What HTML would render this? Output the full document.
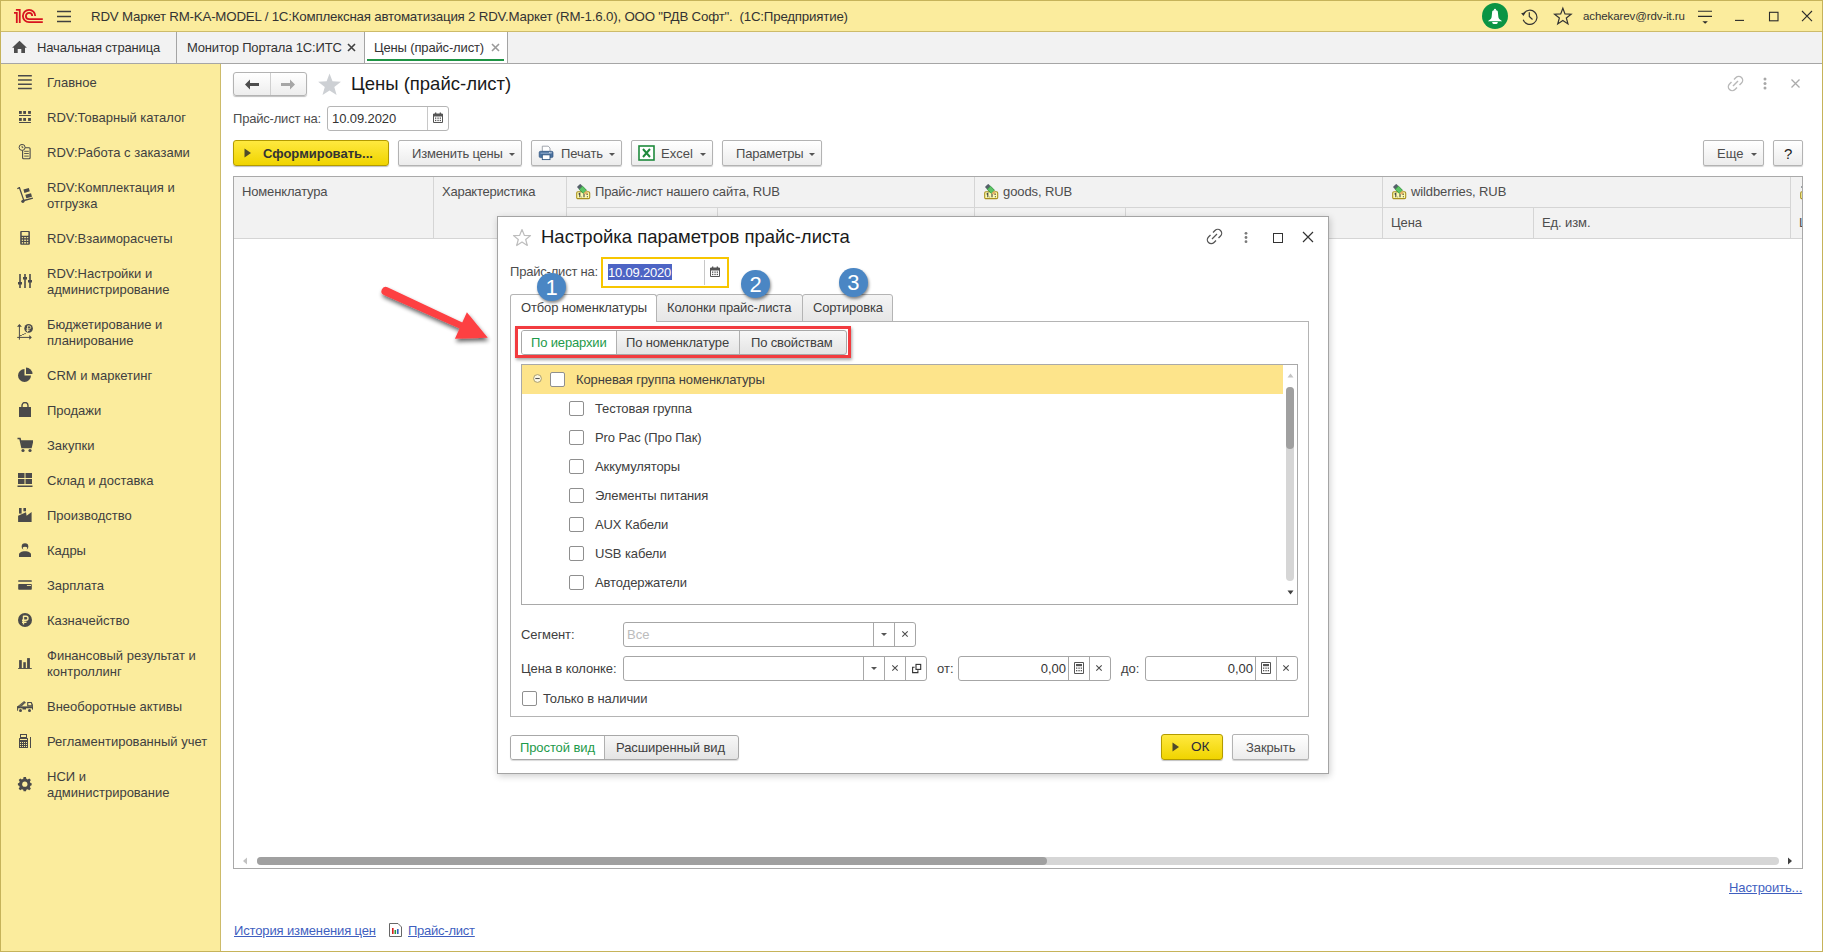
<!DOCTYPE html>
<html><head><meta charset="utf-8">
<style>
*{box-sizing:border-box;margin:0;padding:0}
html,body{width:1823px;height:952px;overflow:hidden;background:#fff}
body{position:relative;font-family:"Liberation Sans",sans-serif;font-size:13px;color:#4d4d4d}
.a{position:absolute}
.t{position:absolute;white-space:nowrap;line-height:16px}
#frame{left:0;top:0;width:1823px;height:952px;border:1px solid #c6b35a;pointer-events:none;z-index:50}
#titlebar{left:0;top:0;width:1823px;height:32px;background:#fbec9d;border-bottom:1px solid #cdbb6a}
#tabs{left:0;top:32px;width:1823px;height:32px;background:#f2f2f2;border-bottom:1px solid #a6a6a6}
#side{left:0;top:64px;width:221px;height:888px;background:#fbec9d;border-right:1px solid #cdbb6a}
.si{position:absolute;left:47px;color:#404040;line-height:16px}
.ic{position:absolute;left:17px;width:16px;height:16px}
.btn{position:absolute;height:26px;border:1px solid #b3b3b3;border-radius:2px;background:linear-gradient(#fff,#ececec);box-shadow:0 1px 1px rgba(0,0,0,.18);color:#404040;line-height:24px;white-space:nowrap}
.dd{position:absolute;width:0;height:0;border-left:3px solid transparent;border-right:3px solid transparent;border-top:3px solid #555}
.hdr{position:absolute;background:#f2f2f2;border-right:1px solid #dcdcdc;border-bottom:1px solid #dcdcdc}
.cb{position:absolute;width:15px;height:15px;border:1px solid #8f8f8f;border-radius:2px;background:#fff}
.fld{position:absolute;height:25px;border:1px solid #a6a6a6;border-radius:3px;background:#fff}
.lnk{position:absolute;color:#3f5fbf;text-decoration:underline;white-space:nowrap;line-height:16px}
</style></head><body>

<!-- title bar -->
<div id="titlebar" class="a"></div>
<svg class="a" style="left:12px;top:7px" width="34" height="18" viewBox="0 0 34 18">
 <g fill="none" stroke="#d7141f" stroke-width="1.8">
  <path d="M2 5.95H4.8V15.9"/>
  <path d="M3.9 2.85H7.75V15.9"/>
  <path d="M23.2 9A6.15 6.15 0 1 0 17.05 15.15H30.8"/>
  <path d="M20.2 9A3.15 3.15 0 1 0 17.05 12.15H30.8"/>
 </g>
</svg>
<svg class="a" style="left:56px;top:10px" width="16" height="13" viewBox="0 0 16 13"><g stroke="#404040" stroke-width="1.4"><path d="M1 1.5H15M1 6.5H15M1 11.5H15"/></g></svg>
<div class="t" style="left:91px;top:9px;color:#333;font-size:13.3px;letter-spacing:-0.2px">RDV Маркет RM-KA-MODEL / 1С:Комплексная автоматизация 2 RDV.Маркет (RM-1.6.0), ООО "РДВ Софт".&nbsp; (1С:Предприятие)</div>
<div class="a" style="left:1481.85px;top:2.9px;width:26px;height:26px;border-radius:50%;background:#0b9444"></div>
<svg class="a" style="left:1481px;top:3px" width="28" height="26" viewBox="0 0 28 26"><circle cx="14" cy="6.8" r="1.1" fill="#fff"/><path d="M11.2 8.6C11.2 7.7 12.5 7.2 14 7.2S16.8 7.7 16.8 8.6L17.4 14.2C17.7 16 19.6 17 21.1 18.2H6.9C8.4 17 10.3 16 10.6 14.2Z" fill="#fff"/><path d="M11.2 18.9H16.8A2.8 2.2 0 0 1 11.2 18.9Z" fill="#fff"/></svg>
<svg class="a" style="left:1519px;top:6px" width="20" height="20" viewBox="0 0 20 20"><g fill="none" stroke="#333" stroke-width="1.2"><path d="M4.2 13.8A7.1 7.1 0 1 0 4.8 7.6"/><path d="M10.3 6.3V10.5L13.5 13.5"/></g><path d="M2.1 7.2L6.7 6.3L4.5 9.9Z" fill="#333"/></svg>
<svg class="a" style="left:1553px;top:6px" width="20" height="20" viewBox="0 0 20 20"><path d="M9.85 2.2L12 7.95L18.1 8.2L13.32 12.03L14.96 17.94L9.85 14.55L4.74 17.94L6.38 12.03L1.58 8.2L7.7 7.95Z" fill="none" stroke="#333" stroke-width="1.2" stroke-linejoin="miter"/></svg>
<div class="t" style="left:1583px;top:8px;color:#333;font-size:11.5px;letter-spacing:-0.1px">achekarev@rdv-it.ru</div>
<svg class="a" style="left:1690px;top:0px" width="133" height="32" viewBox="0 0 133 32"><g stroke="#2b2b2b" stroke-width="1.1" fill="none"><path d="M8 11.3H22M8 16.4H22"/><path d="M45 20.4H54"/><rect x="79.5" y="12.3" width="8.5" height="8.5"/><path d="M112 11L122 21.2M122 11L112 21.2"/></g><path d="M12.4 21.2H17.9L15.15 23.8Z" fill="#2b2b2b"/></svg>
<div id="tabs" class="a"></div>
<svg class="a" style="left:11px;top:40px" width="17" height="14" viewBox="0 0 17 14"><path d="M8.5 0.8L15.9 7.8H14V12.9H10.3V8.9H6.7V12.9H3V7.8H1.1Z" fill="#4d4d4d"/></svg>
<div class="t" style="left:37px;top:39.5px;color:#333;letter-spacing:-0.15px">Начальная страница</div>
<div class="a" style="left:176px;top:32px;width:1px;height:31px;background:#a4a4a4"></div>
<div class="t" style="left:187px;top:39.5px;color:#333;letter-spacing:-0.17px">Монитор Портала 1С:ИТС</div>
<svg class="a" style="left:347px;top:43px" width="9" height="9" viewBox="0 0 9 9"><path d="M1 1L8 8M8 1L1 8" stroke="#404040" stroke-width="1.6"/></svg>
<div class="a" style="left:364px;top:32px;width:1px;height:31px;background:#a4a4a4"></div>
<div class="a" style="left:365px;top:32px;width:142px;height:31px;background:#fff"></div>
<div class="t" style="left:374px;top:39.5px;color:#333;letter-spacing:-0.15px">Цены (прайс-лист)</div>
<svg class="a" style="left:491px;top:43px" width="9" height="9" viewBox="0 0 9 9"><path d="M1 1L8 8M8 1L1 8" stroke="#9a9a9a" stroke-width="1.6"/></svg>
<div class="a" style="left:367px;top:59px;width:137px;height:2px;background:#1e9444"></div>
<div class="a" style="left:507px;top:32px;width:1px;height:31px;background:#a4a4a4"></div>
<div id="side" class="a"></div>
<div class="si" style="top:74.5px">Главное</div>
<svg class="a" style="left:17px;top:74.0px" width="16" height="16" viewBox="0 0 16 16"><path d="M1 1.8H14.8M1 6H14.8M1 10.3H14.8M1 14.6H14.8" stroke="#4a4a4a" stroke-width="1.5"/></svg>
<div class="si" style="top:109.5px">RDV:Товарный каталог</div>
<svg class="a" style="left:17px;top:109.0px" width="16" height="16" viewBox="0 0 16 16"><g fill="#4a4a4a"><rect x="2" y="2" width="2.8" height="2.9"/><rect x="6.2" y="2" width="2.8" height="2.9"/><rect x="11.1" y="2" width="2.8" height="2.9"/><rect x="2" y="6" width="11.9" height="1"/><rect x="2" y="9" width="2.8" height="2.9"/><rect x="6.2" y="9" width="2.8" height="2.9"/><rect x="11.1" y="9" width="2.8" height="2.9"/><rect x="2" y="13" width="11.9" height="1"/></g></svg>
<div class="si" style="top:144.5px">RDV:Работа с заказами</div>
<svg class="a" style="left:17px;top:144.0px" width="16" height="16" viewBox="0 0 16 16"><rect x="5.6" y="3.7" width="7.5" height="11" rx="1" fill="none" stroke="#4a4a4a" stroke-width="1.1"/><path d="M7.2 7.3H11.8M7.2 9.5H11.8M7.2 12.1H11.8" stroke="#4a4a4a" stroke-width="0.9"/><circle cx="5.1" cy="3.4" r="3" fill="#fbec9d" stroke="#4a4a4a" stroke-width="1"/><path d="M5.1 1.8V3.6H6.3" fill="none" stroke="#4a4a4a" stroke-width="0.9"/></svg>
<div class="si" style="top:179.5px">RDV:Комплектация и<br>отгрузка</div>
<svg class="a" style="left:17px;top:187.0px" width="16" height="16" viewBox="0 0 16 16"><path d="M0.3 1.8L2.4 0.6L6.8 13.4M7 13.5L15.9 11.1" fill="none" stroke="#4a4a4a" stroke-width="1.3"/><circle cx="5.9" cy="14.3" r="1.6" fill="#4a4a4a"/><path d="M6.46 2.46L11.83 0.89L12.77 4.36L7.41 5.93Z" fill="#4a4a4a"/><path d="M8.36 7.83L14.03 6.25L14.98 9.72L9.3 11.3Z" fill="#4a4a4a"/></svg>
<div class="si" style="top:230.5px">RDV:Взаиморасчеты</div>
<svg class="a" style="left:17px;top:230.0px" width="16" height="16" viewBox="0 0 16 16"><rect x="3.2" y="1" width="9.7" height="13.8" rx="1" fill="#4a4a4a"/><rect x="4.7" y="2" width="6.7" height="3.7" rx="0.5" fill="#fbec9d"/><g fill="#fbec9d"><rect x="4.8" y="7.1" width="1.3" height="1.1"/><rect x="7.1" y="7.1" width="1.9" height="1.1"/><rect x="9.8" y="7.1" width="1.5" height="1.1"/><rect x="4.8" y="9.6" width="1.3" height="1.3"/><rect x="7.1" y="9.6" width="1.9" height="1.3"/><rect x="9.8" y="9.6" width="1.5" height="1.3"/><rect x="4.8" y="12.1" width="1.3" height="1.4"/><rect x="7.1" y="12.1" width="1.9" height="1.4"/><rect x="9.8" y="12.1" width="1.5" height="1.4"/></g></svg>
<div class="si" style="top:265.5px">RDV:Настройки и<br>администрирование</div>
<svg class="a" style="left:17px;top:273.0px" width="16" height="16" viewBox="0 0 16 16"><g stroke="#4a4a4a" stroke-width="1.6"><path d="M3 1V15M8 1V15M13 1V15"/></g><g fill="#4a4a4a"><rect x="1" y="9" width="4" height="2.5"/><rect x="6" y="4" width="4" height="2.5"/><rect x="11" y="7" width="4" height="2.5"/></g></svg>
<div class="si" style="top:316.5px">Бюджетирование и<br>планирование</div>
<svg class="a" style="left:17px;top:324.0px" width="16" height="16" viewBox="0 0 16 16"><path d="M2.4 1.5V15.7M0.2 13.4H13" fill="none" stroke="#4a4a4a" stroke-width="1"/><path d="M0 2.8L2.4 0L4.9 2.8ZM12.3 11.1L14.8 13.4L12.3 15.7Z" fill="#4a4a4a"/><path d="M3 11.6L4.5 11.5L5.5 10.5H6.8L7.6 9.6H8.8" fill="none" stroke="#4a4a4a" stroke-width="0.9"/><circle cx="11.6" cy="4.4" r="4.3" fill="#4a4a4a"/><path d="M10.6 8V1.9H12.2A1.5 1.5 0 0 1 12.2 4.9H9.3M9.3 6.4H12.5" fill="none" stroke="#fbec9d" stroke-width="0.9"/></svg>
<div class="si" style="top:367.5px">CRM и маркетинг</div>
<svg class="a" style="left:17px;top:367.0px" width="16" height="16" viewBox="0 0 16 16"><path d="M7.5 2A6.5 6.5 0 1 0 14 8.5H7.5Z" fill="#4a4a4a"/><path d="M9 0.5A6.5 6.5 0 0 1 15.5 7H9Z" fill="#4a4a4a"/></svg>
<div class="si" style="top:402.5px">Продажи</div>
<svg class="a" style="left:17px;top:402.0px" width="16" height="16" viewBox="0 0 16 16"><path d="M2 5H14V15H2Z" fill="#4a4a4a"/><path d="M5 6V3.5A3 3 0 0 1 11 3.5V6" fill="none" stroke="#4a4a4a" stroke-width="1.4"/></svg>
<div class="si" style="top:437.5px">Закупки</div>
<svg class="a" style="left:17px;top:437.0px" width="16" height="16" viewBox="0 0 16 16"><path d="M0.5 1.5H3L5 10.5H14L15.5 4H4" fill="none" stroke="#4a4a4a" stroke-width="1.6"/><path d="M4 4H15.5L14 10H5Z" fill="#4a4a4a"/><circle cx="6" cy="13.5" r="1.6" fill="#4a4a4a"/><circle cx="13" cy="13.5" r="1.6" fill="#4a4a4a"/></svg>
<div class="si" style="top:472.5px">Склад и доставка</div>
<svg class="a" style="left:17px;top:472.0px" width="16" height="16" viewBox="0 0 16 16"><g fill="#4a4a4a"><rect x="1" y="1" width="6.5" height="5"/><rect x="8.5" y="1" width="6.5" height="5"/><rect x="1" y="7" width="6.5" height="5"/><rect x="8.5" y="7" width="6.5" height="5"/><rect x="0.5" y="13.5" width="15" height="1.5"/></g></svg>
<div class="si" style="top:507.5px">Производство</div>
<svg class="a" style="left:17px;top:507.0px" width="16" height="16" viewBox="0 0 16 16"><g fill="#4a4a4a"><rect x="2" y="1" width="2.6" height="5.6"/><rect x="6.4" y="1" width="2.6" height="3.3"/><path d="M1.1 8.7L9 5.2L9.6 8.7L14.6 4.9V14.9H1.1Z"/></g></svg>
<div class="si" style="top:542.5px">Кадры</div>
<svg class="a" style="left:17px;top:542.0px" width="16" height="16" viewBox="0 0 16 16"><circle cx="8" cy="4.6" r="3.3" fill="#4a4a4a"/><path d="M5.9 5.2Q8 4.2 10.1 5.2V6.3A2.1 2.3 0 0 1 5.9 6.3Z" fill="#fbec9d"/><path d="M2 14.9V12.6C2 10.6 4.5 9.3 8 9.3S14 10.6 14 12.6V14.9Z" fill="#4a4a4a"/></svg>
<div class="si" style="top:577.5px">Зарплата</div>
<svg class="a" style="left:17px;top:577.0px" width="16" height="16" viewBox="0 0 16 16"><rect x="1.2" y="3.2" width="13.6" height="1.5" rx="0.5" fill="#4a4a4a"/><rect x="1.2" y="6.9" width="13.6" height="5.8" rx="0.8" fill="#4a4a4a"/><rect x="9.9" y="8.1" width="4.1" height="0.9" fill="#fbec9d"/></svg>
<div class="si" style="top:612.5px">Казначейство</div>
<svg class="a" style="left:17px;top:612.0px" width="16" height="16" viewBox="0 0 16 16"><circle cx="8" cy="8" r="7" fill="#4a4a4a"/><path d="M6.5 3.8V12.5M6.2 4.3H9A2 2 0 0 1 9 8.3H5M5 10.2H9.5" stroke="#fbec9d" stroke-width="1.4" fill="none"/></svg>
<div class="si" style="top:647.5px">Финансовый результат и<br>контроллинг</div>
<svg class="a" style="left:17px;top:655.0px" width="16" height="16" viewBox="0 0 16 16"><g fill="#4a4a4a"><rect x="2.1" y="5.1" width="2.7" height="8.1"/><rect x="6.3" y="7.2" width="2.5" height="6"/><rect x="10.1" y="3.1" width="2.8" height="10.1"/><rect x="1.1" y="13" width="13.7" height="0.9"/></g></svg>
<div class="si" style="top:698.5px">Внеоборотные активы</div>
<svg class="a" style="left:17px;top:698.0px" width="16" height="16" viewBox="0 0 16 16"><path d="M10.2 4.1H14.6L15.9 6.8V8.4H10.2Z" fill="#4a4a4a"/><path d="M11.3 5H13.9L14.6 7.3H11.3Z" fill="#fbec9d"/><rect x="0.2" y="8.4" width="15.7" height="1.9" fill="#4a4a4a"/><rect x="5.5" y="10" width="3.5" height="1.5" fill="#4a4a4a"/><path d="M0.3 8.4L7.2 2.9L8.9 4.7L2.6 9.9Z" fill="#4a4a4a"/><path d="M2 8.3L7.3 4M3.5 8.9L8.1 5" stroke="#fbec9d" stroke-width="0.5" stroke-dasharray="0.8 0.8"/><rect x="0.1" y="8.4" width="1" height="4.3" fill="#4a4a4a"/><rect x="15" y="8.4" width="1" height="3.2" fill="#4a4a4a"/><circle cx="3.5" cy="12.5" r="1.5" fill="#4a4a4a"/><circle cx="12.5" cy="12.5" r="1.5" fill="#4a4a4a"/></svg>
<div class="si" style="top:733.5px">Регламентированный учет</div>
<svg class="a" style="left:17px;top:733.0px" width="16" height="16" viewBox="0 0 16 16"><rect x="3.5" y="1.5" width="6" height="3" fill="none" stroke="#4a4a4a" stroke-width="1"/><rect x="2" y="5" width="9" height="10" rx="0.5" fill="#4a4a4a"/><rect x="3" y="6" width="7" height="1" fill="#fbec9d"/><g fill="#fbec9d" shape-rendering="crispEdges"><rect x="3" y="9" width="1" height="1"/><rect x="5" y="9" width="1" height="1"/><rect x="7" y="9" width="1" height="1"/><rect x="9" y="9" width="1" height="1"/><rect x="3" y="11" width="1" height="1"/><rect x="5" y="11" width="1" height="1"/><rect x="7" y="11" width="1" height="1"/><rect x="9" y="11" width="1" height="1"/><rect x="3" y="13" width="1" height="1"/><rect x="5" y="13" width="1" height="1"/><rect x="7" y="13" width="1" height="1"/><rect x="9" y="13" width="1" height="1"/></g><rect x="13" y="4" width="1" height="11" fill="#4a4a4a"/></svg>
<div class="si" style="top:768.5px">НСИ и<br>администрирование</div>
<svg class="a" style="left:17px;top:776.0px" width="16" height="16" viewBox="0 0 16 16"><g fill="#4a4a4a"><path d="M6.6 0.5H9.4L9.8 2.6L11.4 3.3L13.2 2.1L15.1 4L13.9 5.8L14.6 7.4L16 7.8V10.2L14.6 10.6L13.9 12.2L15.1 14L13.2 15.9L11.4 14.7L9.8 15.4L9.4 17H6.6L6.2 15.4L4.6 14.7L2.8 15.9L0.9 14L2.1 12.2L1.4 10.6L0 10.2V7.8L1.4 7.4L2.1 5.8L0.9 4L2.8 2.1L4.6 3.3L6.2 2.6Z" transform="translate(0.9,0.6) scale(0.86)"/></g><circle cx="7.8" cy="8.2" r="2.6" fill="#fbec9d"/></svg>


<!-- ===== content ===== -->
<div class="a" style="left:233px;top:72px;width:74px;height:24px;border:1px solid #b3b3b3;border-radius:3px;background:linear-gradient(#fff,#ededed);box-shadow:0 1px 1px rgba(0,0,0,.25)"></div>
<div class="a" style="left:270px;top:73px;width:1px;height:22px;background:#cfcfcf"></div>
<svg class="a" style="left:245px;top:79px" width="14" height="11" viewBox="0 0 14 11"><path d="M0 5.5L5 0.5V4H14V7H5V10.5Z" fill="#4d4d4d"/></svg>
<svg class="a" style="left:281px;top:79px" width="14" height="11" viewBox="0 0 14 11"><path d="M14 5.5L9 0.5V4H0V7H9V10.5Z" fill="#a6a6a6"/></svg>
<svg class="a" style="left:317px;top:72px" width="25" height="24" viewBox="0 0 25 24"><path d="M12.55 1.4L15.49 9.35L23.96 9.69L17.31 14.95L19.6 23.11L12.55 18.4L5.5 23.11L7.79 14.95L1.14 9.69L9.61 9.35Z" fill="#cdd0d4"/></svg>
<div class="t" style="left:351px;top:73px;font-size:18.5px;line-height:22px;color:#1a1a1a">Цены (прайс-лист)</div>
<svg class="a" style="left:1727px;top:75px" width="17" height="17" viewBox="0 0 17 17"><g fill="none" stroke="#b8b8b8" stroke-width="1.4"><path d="M7 4.5L9 2.5A3 3 0 0 1 14.5 8L12.5 10"/><path d="M10 12.5L8 14.5A3 3 0 0 1 2.5 9L4.5 7"/><path d="M6 11L11 6"/></g></svg>
<svg class="a" style="left:1762px;top:77px" width="6" height="13" viewBox="0 0 6 13"><g fill="#a8a8a8"><circle cx="3" cy="2" r="1.5"/><circle cx="3" cy="6.5" r="1.5"/><circle cx="3" cy="11" r="1.5"/></g></svg>
<svg class="a" style="left:1790px;top:78px" width="11" height="11" viewBox="0 0 11 11"><path d="M1.5 1.5L9.5 9.5M9.5 1.5L1.5 9.5" stroke="#ababab" stroke-width="1.3"/></svg>

<div class="t" style="left:233px;top:111px;letter-spacing:-0.2px">Прайс-лист на:</div>
<div class="fld" style="left:327px;top:106px;width:122px;height:25px;border-color:#b5b5b5"></div>
<div class="a" style="left:427px;top:107px;width:1px;height:23px;background:#c8c8c8"></div>
<div class="t" style="left:332px;top:111px;color:#333;letter-spacing:-0.1px">10.09.2020</div>
<svg class="a" style="left:433px;top:112px" width="10" height="11" viewBox="0 0 10 11"><path d="M0.5 2H9.5V10.5H0.5Z" fill="none" stroke="#555" stroke-width="1"/><rect x="0.5" y="2" width="9" height="2.5" fill="#555"/><rect x="2" y="0.5" width="1.3" height="2.5" fill="#555"/><rect x="6.7" y="0.5" width="1.3" height="2.5" fill="#555"/><g fill="#555"><rect x="2" y="5.5" width="1.3" height="1.3"/><rect x="4.4" y="5.5" width="1.3" height="1.3"/><rect x="6.7" y="5.5" width="1.3" height="1.3"/><rect x="2" y="7.8" width="1.3" height="1.3"/><rect x="4.4" y="7.8" width="1.3" height="1.3"/><rect x="6.7" y="7.8" width="1.3" height="1.3"/></g></svg>

<!-- command bar -->
<div class="a" style="left:233px;top:140px;width:156px;height:26px;border:1px solid #b39b00;border-radius:3px;background:linear-gradient(#ffe93f,#f0d400);box-shadow:0 1px 1px rgba(0,0,0,.25)"></div>
<svg class="a" style="left:244px;top:148px" width="8" height="10" viewBox="0 0 8 10"><path d="M0.5 0.5L7 5L0.5 9.5Z" fill="#4f4a2a"/></svg>
<div class="t" style="left:263px;top:146px;font-weight:bold;color:#333">Сформировать...</div>

<div class="btn" style="left:398px;top:140px;width:124px"></div>
<div class="t" style="left:412px;top:146px;letter-spacing:-0.2px">Изменить цены</div>
<div class="dd" style="left:509px;top:153px"></div>

<div class="btn" style="left:531px;top:140px;width:91px"></div>
<svg class="a" style="left:538px;top:145px" width="16" height="16" viewBox="0 0 16 16"><path d="M4.3 1.2H10.2L12 3V6.8H4.3Z" fill="#fff" stroke="#8a9099" stroke-width="0.8"/><rect x="1.2" y="6.3" width="13.8" height="6.3" rx="1.3" fill="#4a72a0" stroke="#30557f" stroke-width="0.7"/><path d="M2.6 8.2H13.6" stroke="#b5c8e0" stroke-width="0.7"/><circle cx="11.6" cy="7.3" r="0.5" fill="#fff"/><circle cx="13" cy="7.3" r="0.5" fill="#fff"/><rect x="4.3" y="9.8" width="7.7" height="4.8" fill="#fff" stroke="#30557f" stroke-width="0.9"/></svg>
<div class="t" style="left:561px;top:146px;letter-spacing:-0.1px">Печать</div>
<div class="dd" style="left:609px;top:153px"></div>

<div class="btn" style="left:631px;top:140px;width:82px"></div>
<svg class="a" style="left:638px;top:145px" width="17" height="16" viewBox="0 0 17 16"><rect x="1" y="1" width="15" height="14" fill="#fff" stroke="#1e8a3c" stroke-width="1.6"/><path d="M5 4L12 12M12 4L5 12" stroke="#1e8a3c" stroke-width="2"/></svg>
<div class="t" style="left:661px;top:146px">Excel</div>
<div class="dd" style="left:700px;top:153px"></div>

<div class="btn" style="left:722px;top:140px;width:100px"></div>
<div class="t" style="left:736px;top:146px;letter-spacing:-0.2px">Параметры</div>
<div class="dd" style="left:809px;top:153px"></div>

<div class="btn" style="left:1703px;top:140px;width:61px"></div>
<div class="t" style="left:1717px;top:146px">Еще</div>
<div class="dd" style="left:1751px;top:153px"></div>
<div class="btn" style="left:1773px;top:140px;width:30px"></div>
<div class="t" style="left:1784px;top:144.5px;font-size:15px;line-height:18px;color:#222">?</div>

<!-- table -->
<div class="a" style="left:233px;top:176px;width:1570px;height:693px;border:1px solid #a9a9a9;background:#fff"></div>
<div class="a" style="left:234px;top:177px;width:1568px;height:691px;overflow:hidden"><div class="a" style="left:-234px;top:-177px;width:1823px;height:952px">
<div class="a" style="left:234px;top:177px;width:1556px;height:62px;background:#f2f2f2;border-bottom:1px solid #d5d5d5"></div>
<div class="a" style="left:1790px;top:177px;width:12px;height:62px;background:#f2f2f2;border-bottom:1px solid #d5d5d5"></div>
<div class="a" style="left:433px;top:177px;width:1px;height:62px;background:#d5d5d5"></div>
<div class="a" style="left:566px;top:177px;width:1px;height:62px;background:#d5d5d5"></div>
<div class="a" style="left:974px;top:177px;width:1px;height:62px;background:#d5d5d5"></div>
<div class="a" style="left:1382px;top:177px;width:1px;height:62px;background:#d5d5d5"></div>
<div class="a" style="left:1790px;top:177px;width:1px;height:62px;background:#d5d5d5"></div>
<div class="a" style="left:567px;top:207px;width:1223px;height:1px;background:#d5d5d5"></div>
<div class="a" style="left:717px;top:208px;width:1px;height:31px;background:#d5d5d5"></div>
<div class="a" style="left:1125px;top:208px;width:1px;height:31px;background:#d5d5d5"></div>
<div class="a" style="left:1533px;top:208px;width:1px;height:31px;background:#d5d5d5"></div>
<div class="t" style="left:242px;top:184px;letter-spacing:-0.15px">Номенклатура</div>
<div class="t" style="left:442px;top:184px;letter-spacing:-0.25px">Характеристика</div>
<div class="t" style="left:595px;top:184px;letter-spacing:-0.15px">Прайс-лист нашего сайта, RUB</div>
<div class="t" style="left:1003px;top:184px;letter-spacing:-0.1px">goods, RUB</div>
<div class="t" style="left:1411px;top:184px;letter-spacing:-0.1px">wildberries, RUB</div>
<div class="t" style="left:1391px;top:215px;letter-spacing:-0.1px">Цена</div>
<div class="t" style="left:1542px;top:215px;letter-spacing:-0.1px">Ед. изм.</div>
<div class="t" style="left:1799px;top:215px;letter-spacing:-0.1px">Ц</div>
<svg class="a" style="left:575px;top:183px" width="16" height="17" viewBox="0 0 16 17"><rect x="1.7" y="8.8" width="13" height="6.8" rx="1.2" fill="#fdfbb0" stroke="#a8901e" stroke-width="1.1"/><path d="M9 10.5V14.2M12.4 13.2V14.2" stroke="#444" stroke-width="1.1" fill="none"/><path d="M3.6 11.2L4.8 10.3V14.2M6.6 13.8V14.3" stroke="#444" stroke-width="1.1" fill="none"/><g transform="translate(3.6,2.4) rotate(46)"><rect x="0" y="-2.3" width="3.3" height="4.6" rx="0.6" fill="#56616b"/><rect x="3.3" y="-2.3" width="5.8" height="4.6" fill="#5cc466" stroke="#1f8a2c" stroke-width="0.7"/><path d="M9.1 -2.3L13.2 0L9.1 2.3Z" fill="#e6b468"/><path d="M11.8 -0.8L13.4 0L11.8 0.8Z" fill="#444"/></g></svg>
<svg class="a" style="left:983px;top:183px" width="16" height="17" viewBox="0 0 16 17"><rect x="1.7" y="8.8" width="13" height="6.8" rx="1.2" fill="#fdfbb0" stroke="#a8901e" stroke-width="1.1"/><path d="M9 10.5V14.2M12.4 13.2V14.2" stroke="#444" stroke-width="1.1" fill="none"/><path d="M3.6 11.2L4.8 10.3V14.2M6.6 13.8V14.3" stroke="#444" stroke-width="1.1" fill="none"/><g transform="translate(3.6,2.4) rotate(46)"><rect x="0" y="-2.3" width="3.3" height="4.6" rx="0.6" fill="#56616b"/><rect x="3.3" y="-2.3" width="5.8" height="4.6" fill="#5cc466" stroke="#1f8a2c" stroke-width="0.7"/><path d="M9.1 -2.3L13.2 0L9.1 2.3Z" fill="#e6b468"/><path d="M11.8 -0.8L13.4 0L11.8 0.8Z" fill="#444"/></g></svg>
<svg class="a" style="left:1391px;top:183px" width="16" height="17" viewBox="0 0 16 17"><rect x="1.7" y="8.8" width="13" height="6.8" rx="1.2" fill="#fdfbb0" stroke="#a8901e" stroke-width="1.1"/><path d="M9 10.5V14.2M12.4 13.2V14.2" stroke="#444" stroke-width="1.1" fill="none"/><path d="M3.6 11.2L4.8 10.3V14.2M6.6 13.8V14.3" stroke="#444" stroke-width="1.1" fill="none"/><g transform="translate(3.6,2.4) rotate(46)"><rect x="0" y="-2.3" width="3.3" height="4.6" rx="0.6" fill="#56616b"/><rect x="3.3" y="-2.3" width="5.8" height="4.6" fill="#5cc466" stroke="#1f8a2c" stroke-width="0.7"/><path d="M9.1 -2.3L13.2 0L9.1 2.3Z" fill="#e6b468"/><path d="M11.8 -0.8L13.4 0L11.8 0.8Z" fill="#444"/></g></svg>
<svg class="a" style="left:1799px;top:183px" width="16" height="17" viewBox="0 0 16 17"><rect x="1.7" y="8.8" width="13" height="6.8" rx="1.2" fill="#fdfbb0" stroke="#a8901e" stroke-width="1.1"/><path d="M9 10.5V14.2M12.4 13.2V14.2" stroke="#444" stroke-width="1.1" fill="none"/><path d="M3.6 11.2L4.8 10.3V14.2M6.6 13.8V14.3" stroke="#444" stroke-width="1.1" fill="none"/><g transform="translate(3.6,2.4) rotate(46)"><rect x="0" y="-2.3" width="3.3" height="4.6" rx="0.6" fill="#56616b"/><rect x="3.3" y="-2.3" width="5.8" height="4.6" fill="#5cc466" stroke="#1f8a2c" stroke-width="0.7"/><path d="M9.1 -2.3L13.2 0L9.1 2.3Z" fill="#e6b468"/><path d="M11.8 -0.8L13.4 0L11.8 0.8Z" fill="#444"/></g></svg>
</div></div>
<!-- h scrollbar -->
<svg class="a" style="left:242px;top:857px" width="6" height="8" viewBox="0 0 6 8"><path d="M5 0.5V7.5L1 4Z" fill="#c2c2c2"/></svg>
<div class="a" style="left:257px;top:857px;width:1522px;height:8px;border-radius:4px;background:#d6d6d6"></div>
<div class="a" style="left:257px;top:857px;width:790px;height:8px;border-radius:4px;background:#a0a0a0"></div>
<svg class="a" style="left:1787px;top:857px" width="6" height="8" viewBox="0 0 6 8"><path d="M1 0.5V7.5L5 4Z" fill="#404040"/></svg>

<div class="lnk" style="left:1729px;top:880px;letter-spacing:-0.1px">Настроить...</div>
<div class="lnk" style="left:234px;top:923px;letter-spacing:-0.13px">История изменения цен</div>
<svg class="a" style="left:389px;top:923px" width="13" height="14" viewBox="0 0 13 14"><path d="M0.5 0.5H9L12.5 4V13.5H0.5Z" fill="#fff" stroke="#666" stroke-width="1"/><rect x="3" y="5" width="1.6" height="6" fill="#d42020"/><rect x="5.5" y="7" width="1.6" height="4" fill="#2a9a3a"/><rect x="8" y="6" width="1.6" height="5" fill="#3060c0"/></svg>
<div class="lnk" style="left:408px;top:923px;letter-spacing:-0.24px">Прайс-лист</div>


<!-- ===== dialog ===== -->
<div class="a" style="left:497px;top:216px;width:832px;height:558px;background:#fff;border:1px solid #a4a4a4;box-shadow:1px 2px 7px rgba(0,0,0,.2)"></div>
<svg class="a" style="left:512px;top:228px" width="20" height="19" viewBox="0 0 20 19"><path d="M10 1.5L12.3 7.3L18.5 7.6L13.7 11.5L15.3 17.5L10 14.1L4.7 17.5L6.3 11.5L1.5 7.6L7.7 7.3Z" fill="none" stroke="#bdbdbd" stroke-width="1.2" stroke-linejoin="round"/></svg>
<div class="t" style="left:541px;top:226px;font-size:18.5px;line-height:22px;color:#1a1a1a">Настройка параметров прайс-листа</div>
<svg class="a" style="left:1206px;top:228px" width="17" height="17" viewBox="0 0 17 17"><g fill="none" stroke="#555" stroke-width="1.3"><path d="M7 4.5L9 2.5A3 3 0 0 1 14.5 8L12.5 10"/><path d="M10 12.5L8 14.5A3 3 0 0 1 2.5 9L4.5 7"/><path d="M6 11L11 6"/></g></svg>
<svg class="a" style="left:1243px;top:231px" width="6" height="13" viewBox="0 0 6 13"><g fill="#7a7a7a"><circle cx="3" cy="2.3" r="1.4"/><circle cx="3" cy="6.5" r="1.4"/><circle cx="3" cy="10.7" r="1.4"/></g></svg>
<div class="a" style="left:1272.5px;top:232.5px;width:10px;height:10px;border:1.3px solid #333"></div>
<svg class="a" style="left:1302px;top:231px" width="12" height="12" viewBox="0 0 12 12"><path d="M1 1L11 11M11 1L1 11" stroke="#333" stroke-width="1.2"/></svg>

<div class="t" style="left:510px;top:264px;letter-spacing:-0.2px">Прайс-лист на:</div>
<div class="a" style="left:601px;top:257px;width:128px;height:31px;border:2px solid #f7c600;background:#fff"></div>
<div class="a" style="left:704px;top:260px;width:1px;height:25px;background:#c8c8c8"></div>
<div class="a" style="left:608px;top:264px;width:64px;height:16px;background:#4d64c4"></div>
<div class="t" style="left:608px;top:264.5px;color:#fff;letter-spacing:-0.2px">10.09.2020</div>
<svg class="a" style="left:710px;top:266px" width="10" height="11" viewBox="0 0 10 11"><path d="M0.5 2H9.5V10.5H0.5Z" fill="none" stroke="#555" stroke-width="1"/><rect x="0.5" y="2" width="9" height="2.5" fill="#555"/><rect x="2" y="0.5" width="1.3" height="2.5" fill="#555"/><rect x="6.7" y="0.5" width="1.3" height="2.5" fill="#555"/><g fill="#555"><rect x="2" y="5.5" width="1.3" height="1.3"/><rect x="4.4" y="5.5" width="1.3" height="1.3"/><rect x="6.7" y="5.5" width="1.3" height="1.3"/><rect x="2" y="7.8" width="1.3" height="1.3"/><rect x="4.4" y="7.8" width="1.3" height="1.3"/><rect x="6.7" y="7.8" width="1.3" height="1.3"/></g></svg>

<!-- tabs -->
<div class="a" style="left:510px;top:321px;width:799px;height:396px;border:1px solid #b4b4b4;background:#fff"></div>
<div class="a" style="left:656px;top:294px;width:147px;height:28px;border:1px solid #b4b4b4;border-radius:3px 3px 0 0;background:linear-gradient(#f4f4f4,#e6e6e6)"></div>
<div class="a" style="left:802px;top:294px;width:91px;height:28px;border:1px solid #b4b4b4;border-radius:3px 3px 0 0;background:linear-gradient(#f4f4f4,#e6e6e6)"></div>
<div class="a" style="left:510px;top:294px;width:147px;height:28px;border:1px solid #b4b4b4;border-bottom:none;border-radius:3px 3px 0 0;background:#fff"></div>
<div class="t" style="left:521px;top:300px;letter-spacing:-0.15px;color:#404040">Отбор номенклатуры</div>
<div class="t" style="left:667px;top:300px;letter-spacing:-0.15px;color:#404040">Колонки прайс-листа</div>
<div class="t" style="left:813px;top:300px;letter-spacing:-0.15px;color:#404040">Сортировка</div>

<!-- radio group with red highlight -->
<div class="a" style="left:521px;top:330px;width:326px;height:25px;border:1px solid #a8a8a8;border-radius:3px;background:linear-gradient(#f7f7f7,#e4e4e4)"></div>
<div class="a" style="left:522px;top:331px;width:94px;height:23px;background:#fff;border-radius:2px 0 0 2px"></div>
<div class="a" style="left:616px;top:331px;width:1px;height:23px;background:#b0b0b0"></div>
<div class="a" style="left:739px;top:331px;width:1px;height:23px;background:#b0b0b0"></div>
<div class="t" style="left:531px;top:335px;color:#1d9a4a;letter-spacing:-0.15px">По иерархии</div>
<div class="t" style="left:626px;top:335px;letter-spacing:-0.15px;color:#404040">По номенклатуре</div>
<div class="t" style="left:751px;top:335px;letter-spacing:-0.15px;color:#404040">По свойствам</div>
<div class="a" style="left:515px;top:326px;width:336px;height:32px;border:3px solid #f23b3f;box-shadow:1px 2px 3px rgba(0,0,0,.35)"></div>

<!-- tree -->
<div class="a" style="left:521px;top:364px;width:777px;height:241px;border:1px solid #a9a9a9;background:#fff"></div>
<div class="a" style="left:522px;top:365px;width:761px;height:29px;background:#fde48b"></div>
<svg class="a" style="left:533px;top:374px" width="9" height="9" viewBox="0 0 9 9"><circle cx="4.5" cy="4.5" r="3.9" fill="#fdf9e6" stroke="#a89c6c" stroke-width="1"/><path d="M2.3 4.5H6.7" stroke="#555" stroke-width="1.1"/></svg>
<div class="cb" style="left:550px;top:372px"></div>
<div class="t" style="left:576px;top:371.5px;letter-spacing:-0.1px;color:#404040">Корневая группа номенклатуры</div>
<div class="cb" style="left:569px;top:401px"></div>
<div class="t" style="left:595px;top:400.6px;letter-spacing:-0.1px;color:#404040">Тестовая группа</div>
<div class="cb" style="left:569px;top:430px"></div>
<div class="t" style="left:595px;top:429.6px;letter-spacing:-0.1px;color:#404040">Pro Pac (Про Пак)</div>
<div class="cb" style="left:569px;top:459px"></div>
<div class="t" style="left:595px;top:458.6px;letter-spacing:-0.1px;color:#404040">Аккумуляторы</div>
<div class="cb" style="left:569px;top:488px"></div>
<div class="t" style="left:595px;top:487.6px;letter-spacing:-0.1px;color:#404040">Элементы питания</div>
<div class="cb" style="left:569px;top:517px"></div>
<div class="t" style="left:595px;top:516.6px;letter-spacing:-0.1px;color:#404040">AUX Кабели</div>
<div class="cb" style="left:569px;top:546px"></div>
<div class="t" style="left:595px;top:545.6px;letter-spacing:-0.1px;color:#404040">USB кабели</div>
<div class="cb" style="left:569px;top:575px"></div>
<div class="t" style="left:595px;top:574.6px;letter-spacing:-0.1px;color:#404040">Автодержатели</div>
<svg class="a" style="left:1287px;top:373px" width="7" height="5" viewBox="0 0 7 5"><path d="M0.5 4.5L3.5 0.5L6.5 4.5Z" fill="#c4c4c4"/></svg>
<div class="a" style="left:1286px;top:387px;width:8px;height:194px;border-radius:4px;background:#d6d6d6"></div>
<div class="a" style="left:1286px;top:387px;width:8px;height:62px;border-radius:4px;background:#a0a0a0"></div>
<svg class="a" style="left:1287px;top:590px" width="7" height="5" viewBox="0 0 7 5"><path d="M0.5 0.5L3.5 4.5L6.5 0.5Z" fill="#404040"/></svg>

<!-- filters -->
<div class="t" style="left:521px;top:626.5px;letter-spacing:-0.1px;color:#404040">Сегмент:</div>
<div class="fld" style="left:623px;top:622px;width:293px;height:25px"></div>
<div class="a" style="left:873px;top:623px;width:1px;height:23px;background:#a8a8a8"></div>
<div class="a" style="left:894px;top:623px;width:1px;height:23px;background:#a8a8a8"></div>
<div class="t" style="left:627px;top:626.5px;color:#bcbcbc">Все</div>
<div class="dd" style="left:881px;top:633px"></div>
<svg class="a" style="left:901px;top:630px" width="8" height="8" viewBox="0 0 8 8"><path d="M1.3 1.3L6.7 6.7M6.7 1.3L1.3 6.7" stroke="#4a4a4a" stroke-width="1.05"/></svg>

<div class="t" style="left:521px;top:660.5px;letter-spacing:-0.1px;color:#404040">Цена в колонке:</div>
<div class="fld" style="left:623px;top:656px;width:304px;height:25px"></div>
<div class="a" style="left:863px;top:657px;width:1px;height:23px;background:#a8a8a8"></div>
<div class="a" style="left:884px;top:657px;width:1px;height:23px;background:#a8a8a8"></div>
<div class="a" style="left:905px;top:657px;width:1px;height:23px;background:#a8a8a8"></div>
<div class="dd" style="left:871px;top:667px"></div>
<svg class="a" style="left:891px;top:664px" width="8" height="8" viewBox="0 0 8 8"><path d="M1.3 1.3L6.7 6.7M6.7 1.3L1.3 6.7" stroke="#4a4a4a" stroke-width="1.05"/></svg>
<svg class="a" style="left:911px;top:663px" width="11" height="11" viewBox="0 0 11 11"><rect x="5" y="1.4" width="4.7" height="5" fill="none" stroke="#333" stroke-width="1.1"/><path d="M3.6 4.3H1.6V9.6H6.9V7.3" fill="none" stroke="#333" stroke-width="1.1"/></svg>

<div class="t" style="left:937px;top:660.5px;color:#404040">от:</div>
<div class="fld" style="left:958px;top:656px;width:153px;height:25px"></div>
<div class="a" style="left:1068px;top:657px;width:1px;height:23px;background:#a8a8a8"></div>
<div class="a" style="left:1089px;top:657px;width:1px;height:23px;background:#a8a8a8"></div>
<div class="t" style="left:1040px;top:660.5px;color:#333;width:26px;text-align:right">0,00</div>
<svg class="a" style="left:1074px;top:662px" width="10" height="12" viewBox="0 0 10 12"><path d="M0.5 0.5H9.5V11.5H0.5Z" fill="none" stroke="#555" stroke-width="1"/><rect x="2" y="2" width="6" height="2.2" fill="#555"/><g fill="#555"><rect x="2" y="5.5" width="1.3" height="1.3"/><rect x="4.4" y="5.5" width="1.3" height="1.3"/><rect x="6.7" y="5.5" width="1.3" height="1.3"/><rect x="2" y="8" width="1.3" height="1.3"/><rect x="4.4" y="8" width="1.3" height="1.3"/><rect x="6.7" y="8" width="1.3" height="1.3"/></g></svg>
<svg class="a" style="left:1095px;top:664px" width="8" height="8" viewBox="0 0 8 8"><path d="M1.3 1.3L6.7 6.7M6.7 1.3L1.3 6.7" stroke="#4a4a4a" stroke-width="1.05"/></svg>

<div class="t" style="left:1121px;top:660.5px;color:#404040">до:</div>
<div class="fld" style="left:1145px;top:656px;width:153px;height:25px"></div>
<div class="a" style="left:1255px;top:657px;width:1px;height:23px;background:#a8a8a8"></div>
<div class="a" style="left:1276px;top:657px;width:1px;height:23px;background:#a8a8a8"></div>
<div class="t" style="left:1227px;top:660.5px;color:#333;width:26px;text-align:right">0,00</div>
<svg class="a" style="left:1261px;top:662px" width="10" height="12" viewBox="0 0 10 12"><path d="M0.5 0.5H9.5V11.5H0.5Z" fill="none" stroke="#555" stroke-width="1"/><rect x="2" y="2" width="6" height="2.2" fill="#555"/><g fill="#555"><rect x="2" y="5.5" width="1.3" height="1.3"/><rect x="4.4" y="5.5" width="1.3" height="1.3"/><rect x="6.7" y="5.5" width="1.3" height="1.3"/><rect x="2" y="8" width="1.3" height="1.3"/><rect x="4.4" y="8" width="1.3" height="1.3"/><rect x="6.7" y="8" width="1.3" height="1.3"/></g></svg>
<svg class="a" style="left:1282px;top:664px" width="8" height="8" viewBox="0 0 8 8"><path d="M1.3 1.3L6.7 6.7M6.7 1.3L1.3 6.7" stroke="#4a4a4a" stroke-width="1.05"/></svg>

<div class="cb" style="left:522px;top:691px"></div>
<div class="t" style="left:543px;top:690.5px;letter-spacing:-0.1px;color:#404040">Только в наличии</div>

<!-- bottom buttons -->
<div class="a" style="left:510px;top:735px;width:229px;height:25px;border:1px solid #a8a8a8;border-radius:3px;background:linear-gradient(#f7f7f7,#e4e4e4);box-shadow:0 1px 1px rgba(0,0,0,.15)"></div>
<div class="a" style="left:511px;top:736px;width:93px;height:23px;background:#fff;border-radius:2px 0 0 2px"></div>
<div class="a" style="left:604px;top:736px;width:1px;height:23px;background:#b0b0b0"></div>
<div class="t" style="left:520px;top:739.5px;color:#1d9a4a;letter-spacing:-0.1px">Простой вид</div>
<div class="t" style="left:616px;top:739.5px;letter-spacing:-0.1px;color:#404040">Расширенный вид</div>

<div class="a" style="left:1161px;top:734px;width:62px;height:26px;border:1px solid #b39b00;border-radius:3px;background:linear-gradient(#ffe93f,#f0d400);box-shadow:0 1px 1px rgba(0,0,0,.25)"></div>
<svg class="a" style="left:1172px;top:742px" width="8" height="10" viewBox="0 0 8 10"><path d="M0.5 0.5L7 5L0.5 9.5Z" fill="#4f4a2a"/></svg>
<div class="t" style="left:1191px;top:739px;color:#2a2a3a;font-size:13.6px">ОК</div>
<div class="btn" style="left:1232px;top:734px;width:77px"></div>
<div class="t" style="left:1246px;top:739.5px;letter-spacing:-0.1px">Закрыть</div>

<!-- annotations -->
<svg class="a" style="left:360px;top:270px;overflow:visible" width="150" height="90" viewBox="0 0 150 90">
 <defs><filter id="sh" x="-30%" y="-30%" width="160%" height="160%"><feGaussianBlur in="SourceAlpha" stdDeviation="2"/><feOffset dx="1" dy="3"/><feComponentTransfer><feFuncA type="linear" slope="0.6"/></feComponentTransfer><feMerge><feMergeNode/><feMergeNode in="SourceGraphic"/></feMerge></filter></defs>
 <g filter="url(#sh)">
  <path d="M27.38 17.29L103.37 53L100.63 59L23.82 25.11A4.3 4.3 0 0 1 27.38 17.29Z" fill="#fd3f43"/>
  <path d="M127.8 67.7L106.9 42.2L94.9 68.8Z" fill="#fd3f43"/>
 </g>
</svg>
<div class="a" style="left:537.4px;top:272.8px;width:28.5px;height:28.5px;border-radius:50%;background:#4a86c4;box-shadow:1px 2px 3px rgba(0,0,0,.45);color:#fff;font-size:22px;line-height:29px;text-align:center">1</div>
<div class="a" style="left:741.4px;top:269.8px;width:28.5px;height:28.5px;border-radius:50%;background:#4a86c4;box-shadow:1px 2px 3px rgba(0,0,0,.45);color:#fff;font-size:22px;line-height:29px;text-align:center">2</div>
<div class="a" style="left:839.2px;top:268.3px;width:28.5px;height:28.5px;border-radius:50%;background:#4a86c4;box-shadow:1px 2px 3px rgba(0,0,0,.45);color:#fff;font-size:22px;line-height:29px;text-align:center">3</div>

<div id="frame" class="a"></div>
</body></html>
